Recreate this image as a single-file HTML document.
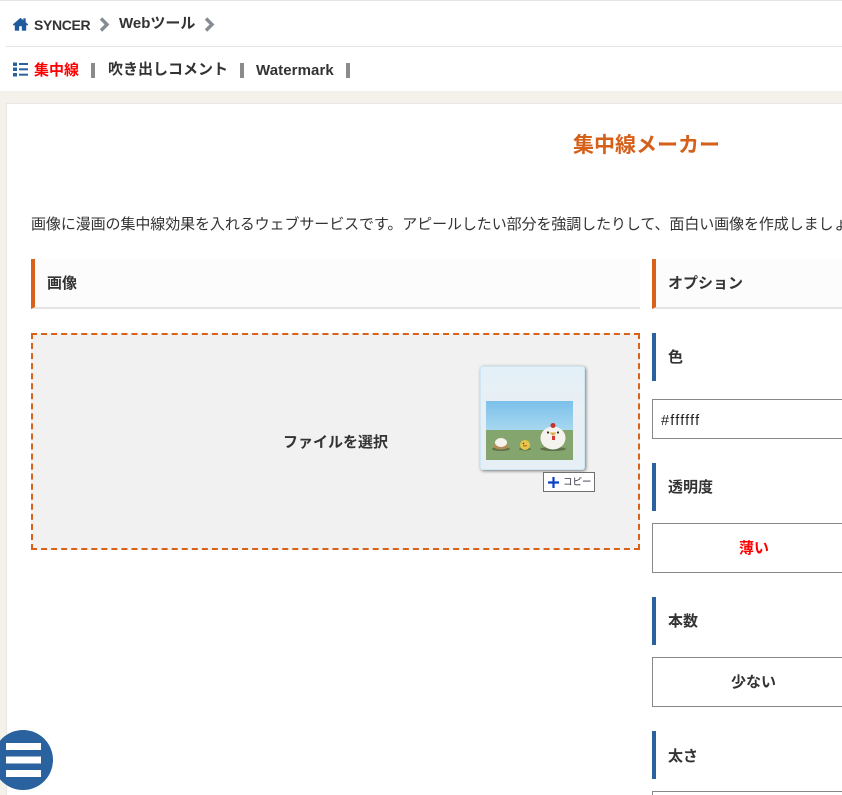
<!DOCTYPE html>
<html lang="ja"><head><meta charset="utf-8"><title>集中線メーカー</title>
<style>
html,body{margin:0;padding:0;width:842px;height:795px;overflow:hidden;background:#fff}
body{position:relative;font-family:"Liberation Sans","Noto Sans CJK JP",sans-serif;color:#333;font-size:15px}
.a{position:absolute;white-space:nowrap}
.b{font-weight:700}
.sep{position:absolute;width:4px;height:15px;background:#8b8b8b;top:63px}
.hd{position:absolute;background:#fcfcfc;border-left:4px solid #d9621b;border-bottom:2px solid #e4e4e4;height:48px;box-sizing:content-box}
.bar{position:absolute;left:652px;width:4px;height:48px;background:#2a619f}
.box{position:absolute;left:652px;width:190px;border:1px solid #888;border-right:none;box-sizing:border-box;background:#fff}
</style></head><body>
<div class="a" style="left:0;top:0;width:842px;height:1px;background:#e4e4e4"></div>
<svg class="a" style="left:13px;top:17px" width="15" height="14" viewBox="0 0 15 14"><path d="M7.500 1 0 7.500l1 1L2 7.600V13.500H6V9H9V13.500H13V7.600l1 .9 1-1L12.500 5.300V1.500H10.500V3.600Z" fill="#1f5a9c" stroke="#1f5a9c" stroke-width=".4"/></svg>
<div class="a b" style="left:34px;top:15px;line-height:20px;font-size:14px;letter-spacing:-.35px">SYNCER</div>
<svg class="a" style="left:99px;top:17px" width="11" height="15" viewBox="0 0 11 15"><path d="M2 1.500 8 7.500 2 13.500" fill="none" stroke="#858c94" stroke-width="3.400"/></svg>
<div class="a b" style="left:119px;top:14px;line-height:20px;font-size:15px">Webツール</div>
<svg class="a" style="left:204px;top:17px" width="11" height="15" viewBox="0 0 11 15"><path d="M2 1.500 8 7.500 2 13.500" fill="none" stroke="#858c94" stroke-width="3.400"/></svg>
<div class="a" style="left:6px;top:46px;width:836px;height:1px;background:#e4e4e4"></div>

<svg class="a" style="left:12px;top:62px" width="16" height="15" viewBox="0 0 16 15" fill="#2a619f"><rect x="1" y="0.500" width="4" height="3.500"/><rect x="1" y="5.500" width="4" height="3.500"/><rect x="1" y="11" width="4" height="3.500"/><rect x="7" y="1" width="9" height="2"/><rect x="7" y="6.300" width="9" height="2"/><rect x="7" y="11.700" width="9" height="2"/></svg>
<div class="a b" style="left:34px;top:61px;line-height:20px;color:#f00;font-size:15px">集中線</div>
<div class="sep" style="left:91px"></div>
<div class="a b" style="left:108px;top:60px;line-height:20px;font-size:15px">吹き出しコメント</div>
<div class="sep" style="left:240px"></div>
<div class="a b" style="left:256px;top:61px;line-height:20px;font-size:15px;letter-spacing:.1px">Watermark</div>
<div class="sep" style="left:346px"></div>

<div class="a" style="left:0;top:91px;width:842px;height:704px;background:#f4f1ea"></div>
<div class="a" style="left:6px;top:103px;width:836px;height:692px;background:#fff;border-left:1px solid #e6e6e6;border-top:1px solid #e6e6e6;box-sizing:border-box"></div>

<div class="a b" style="left:573px;top:132px;line-height:28px;font-size:21px;color:#d4601a">集中線メーカー</div>
<div class="a" style="left:31px;top:213px;line-height:24px;font-size:15px;letter-spacing:-.09px;width:811px;overflow:hidden">画像に漫画の集中線効果を入れるウェブサービスです。アピールしたい部分を強調したりして、面白い画像を作成しましょう。</div>

<div class="hd" style="left:31px;top:259px;width:605px"></div>
<div class="a b" style="left:47px;top:274px;line-height:20px;font-size:15px">画像</div>
<div class="hd" style="left:652px;top:259px;width:186px"></div>
<div class="a b" style="left:668px;top:274px;line-height:20px;font-size:15px">オプション</div>

<div class="a" style="left:31px;top:333px;width:609px;height:217px;box-sizing:border-box;border:2px dashed #d9621b;background:#f1f1f1"></div>
<div class="a b" style="left:283px;top:433px;line-height:20px;font-size:15px">ファイルを選択</div>

<div class="a" style="left:480px;top:366px;width:105px;height:104px;box-sizing:border-box;border:1px solid #cfe6f5;border-radius:3px;background:linear-gradient(#e3f0f8,#e9eff3 40%,#e6eff5);box-shadow:1px 1px 3px rgba(0,0,0,.5)"></div>
<svg class="a" style="left:486px;top:401px" width="87" height="59" viewBox="0 0 87 59">
<defs><linearGradient id="s" x1="0" y1="0" x2="0" y2="1"><stop offset="0" stop-color="#7cc0ea"/><stop offset="1" stop-color="#a8d8f0"/></linearGradient></defs>
<rect width="87" height="30" fill="url(#s)"/><rect y="29" width="87" height="30" fill="#84a56e"/>
<ellipse cx="15" cy="48" rx="9" ry="2" fill="#5f7248"/><ellipse cx="15" cy="45" rx="7.500" ry="3.500" fill="#b58c58"/><ellipse cx="15" cy="41.500" rx="6" ry="4.500" fill="#f6f3ee"/>
<ellipse cx="39" cy="48" rx="6" ry="1.500" fill="#5f7248"/><circle cx="39" cy="44" r="5" fill="#e5c64a"/><rect x="37" y="44" width="4" height="1.500" fill="#c87a2a"/><circle cx="37.500" cy="42.500" r=".7" fill="#333"/>
<ellipse cx="67" cy="48" rx="13" ry="2" fill="#5f7248"/><ellipse cx="67" cy="37" rx="12.500" ry="11.500" fill="#f5f3ee"/><circle cx="67" cy="24.500" r="2.500" fill="#c9302c"/><path d="M63.500 31.500h7l-3.500 3.500z" fill="#e0a83a"/><rect x="66" y="35" width="3" height="4" fill="#d33b3b"/><circle cx="62" cy="31.500" r="1.100" fill="#333"/><circle cx="72" cy="31.500" r="1.100" fill="#333"/>
</svg>
<div class="a" style="left:543px;top:472px;width:52px;height:20px;box-sizing:border-box;border:1px solid #707070;background:#fff"></div>
<svg class="a" style="left:548px;top:477px" width="11" height="11" viewBox="0 0 11 11"><path d="M0 5.500H11M5.500 0V11" stroke="#0b3fc4" stroke-width="2.200"/></svg>
<div class="a" style="left:563px;top:475px;line-height:15px;font-size:9.500px;color:#334">コピー</div>

<div class="bar" style="top:333px"></div>
<div class="a b" style="left:668px;top:348px;line-height:20px;font-size:15px">色</div>
<div class="box" style="top:399px;height:40px"></div>
<div class="a" style="left:661px;top:411px;line-height:20px;font-size:14.500px;letter-spacing:1.200px;color:#222">#ffffff</div>

<div class="bar" style="top:463px"></div>
<div class="a b" style="left:668px;top:478px;line-height:20px;font-size:15px">透明度</div>
<div class="box" style="top:523px;height:50px"></div>
<div class="a b" style="left:739px;top:539px;line-height:20px;font-size:15px;color:#f00">薄い</div>

<div class="bar" style="top:597px"></div>
<div class="a b" style="left:668px;top:612px;line-height:20px;font-size:15px">本数</div>
<div class="box" style="top:657px;height:50px"></div>
<div class="a b" style="left:731px;top:673px;line-height:20px;font-size:15px">少ない</div>

<div class="bar" style="top:731px"></div>
<div class="a b" style="left:668px;top:747px;line-height:20px;font-size:15px">太さ</div>
<div class="box" style="top:791px;height:4px;border-bottom:none"></div>

<svg class="a" style="left:0;top:730px" width="54" height="62" viewBox="0 0 54 62"><circle cx="23" cy="30" r="30" fill="#2a619f"/><g fill="#fff"><rect x="6" y="13" width="35" height="7"/><rect x="6" y="26.500" width="35" height="7"/><rect x="6" y="40" width="35" height="7"/></g></svg>
</body></html>
